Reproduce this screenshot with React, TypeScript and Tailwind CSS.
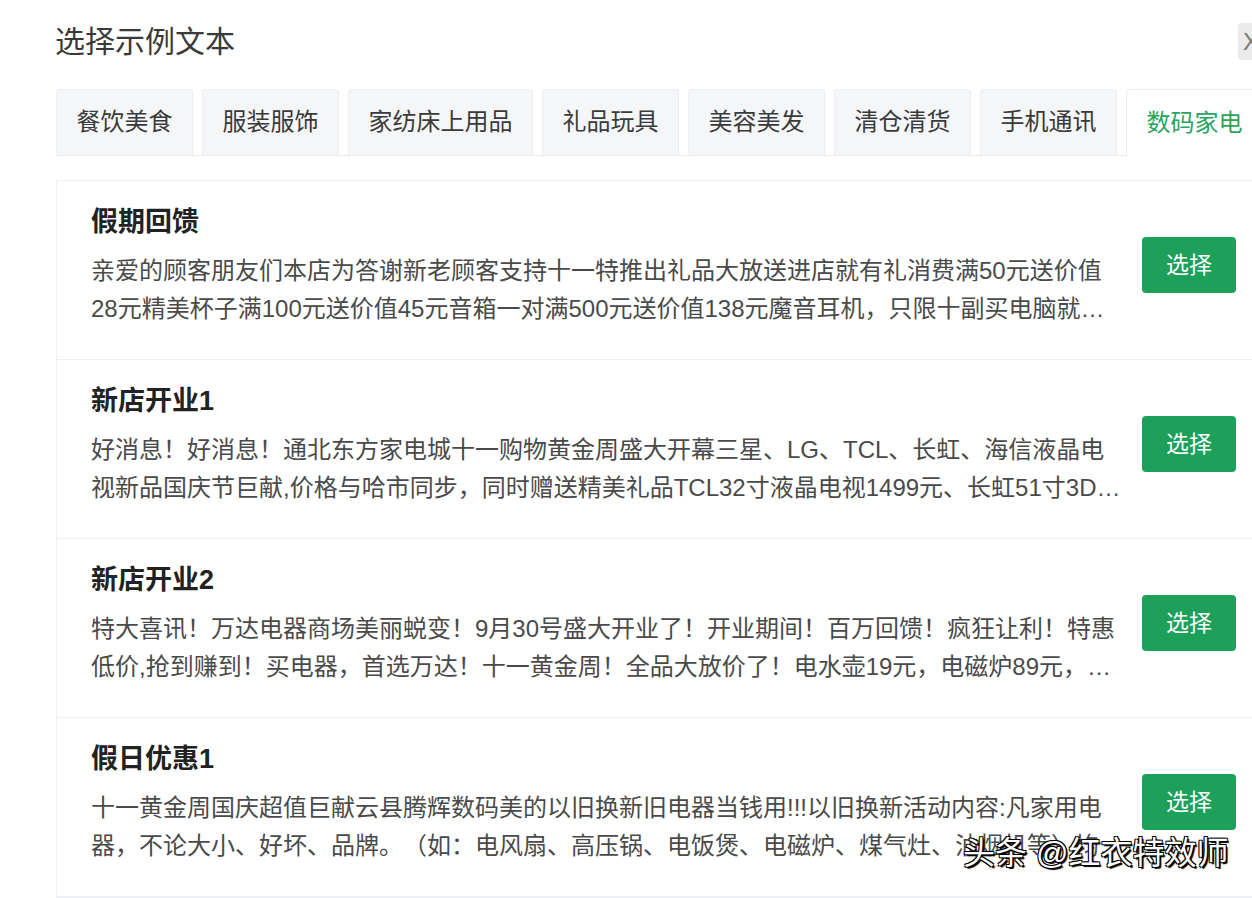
import React from "react";

const tabs = ["餐饮美食", "服装服饰", "家纺床上用品", "礼品玩具", "美容美发", "清仓清货", "手机通讯", "数码家电"];

const items = [
  {
    title: "假期回馈",
    body: "亲爱的顾客朋友们本店为答谢新老顾客支持十一特推出礼品大放送进店就有礼消费满50元送价值28元精美杯子满100元送价值45元音箱一对满500元送价值138元魔音耳机，只限十副买电脑就送精美礼品一份，欢迎新老顾客光临选购。",
  },
  {
    title: "新店开业1",
    body: "好消息！好消息！通北东方家电城十一购物黄金周盛大开幕三星、LG、TCL、长虹、海信液晶电视新品国庆节巨献,价格与哈市同步，同时赠送精美礼品TCL32寸液晶电视1499元、长虹51寸3D等离子电视火爆热销中。",
  },
  {
    title: "新店开业2",
    body: "特大喜讯！万达电器商场美丽蜕变！9月30号盛大开业了！开业期间！百万回馈！疯狂让利！特惠低价,抢到赚到！买电器，首选万达！十一黄金周！全品大放价了！电水壶19元，电磁炉89元，电饭煲99元。",
  },
  {
    title: "假日优惠1",
    body: "十一黄金周国庆超值巨献云县腾辉数码美的以旧换新旧电器当钱用!!!以旧换新活动内容:凡家用电器，不论大小、好坏、品牌。（如：电风扇、高压锅、电饭煲、电磁炉、煤气灶、油烟机等）均可抵现金使用。",
  },
];

export default function App() {
  return (
    <div
      className="relative w-[1252px] h-[898px] overflow-hidden bg-white [text-spacing-trim:space-all]"
      style={{ fontFamily: '"Liberation Sans", "Noto Sans CJK SC", sans-serif' }}
    >
      <div className="flex h-[83px] items-center pl-[55px]">
        <div className="text-[30px] leading-[40px] text-[#3a3a3a]">选择示例文本</div>
        <div className="ml-auto mr-[-26px] flex h-[37px] w-[40px] shrink-0 items-center justify-start rounded-[4px] bg-[#ebebeb] pl-[5px] text-[24px] text-[#777]">
          X
        </div>
      </div>

      <div className="ml-[56px] mt-[6px] flex w-[1240px] gap-[9px] border-b border-[#e9ebf0]">
        {tabs.map((t, i) => {
          const active = i === tabs.length - 1;
          return (
            <div
              key={t}
              className={
                active
                  ? "-mb-px flex h-[67px] shrink-0 items-center rounded-t-[4px] border border-b-0 border-[#e9ebf0] bg-white px-[19.5px] pb-[1px] text-[24px] text-[#2aa55f]"
                  : "flex h-[66px] shrink-0 items-center rounded-t-[4px] border border-b-0 border-[#eceef2] bg-[#f5f6f8] px-[19.5px] pb-[1px] text-[24px] text-[#3a3a3a]"
              }
            >
              {t}
            </div>
          );
        })}
      </div>

      <div className="ml-[56px] mt-[24px] w-[1240px] border border-[#eef0f5] bg-white">
        {items.map((it) => (
          <div key={it.title} className="flex items-center border-b border-[#eef0f5] pb-[31px] pl-[34px] pt-[21px]">
            <div className="w-[1032px] shrink-0">
              <div className="text-[27px] font-bold leading-[40px] text-[#222]">{it.title}</div>
              <div className="mt-[10px] line-clamp-2 text-[24px] leading-[38px] text-[#4a4a4a]">{it.body}</div>
            </div>
            <button className="ml-[19px] flex h-[56px] w-[94px] shrink-0 items-center justify-center rounded-[4px] bg-[#1ca05a] text-[23px] text-white">
              选择
            </button>
          </div>
        ))}
      </div>

      <div
        className="absolute left-[963px] top-[833px] whitespace-nowrap text-[32px] leading-[40px] text-white"
        style={{
          textShadow:
            "1px 1px 0 #000, -1px -1px 0 #000, 1px -1px 0 #000, -1px 1px 0 #000, 2px 2px 1px #000",
        }}
      >
        头条 @红衣特效师
      </div>
    </div>
  );
}
